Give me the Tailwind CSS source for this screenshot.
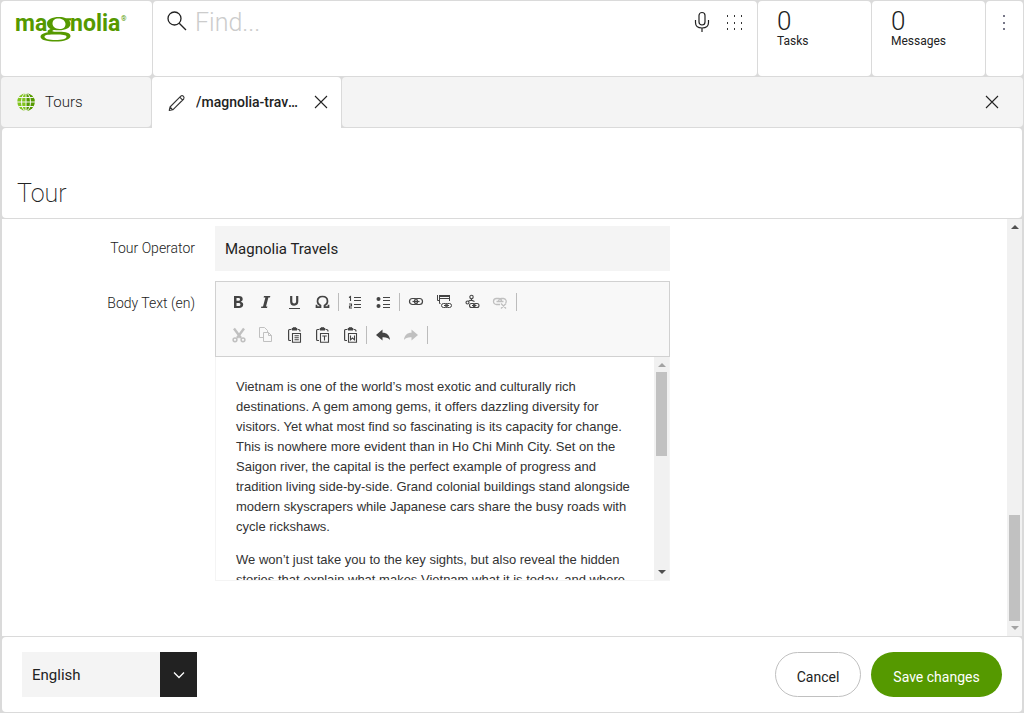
<!DOCTYPE html>
<html lang="en">
<head>
<meta charset="utf-8">
<meta name="viewport" content="width=device-width, initial-scale=1">
<title>Magnolia – Tours</title>
<script src="https://cdn.jsdelivr.net/npm/@tailwindcss/browser@4"></script>
</head>
<body class="flex h-screen flex-col gap-px overflow-hidden bg-[#dadada] p-px font-['Roboto',sans-serif] text-[#222]">

<!-- Shell header -->
<header class="flex h-[75px] shrink-0 gap-px">
  <a href="#" aria-label="Magnolia" class="block w-[151px] shrink-0 rounded-sm bg-white pt-2 pl-3">
    <svg width="120" height="36" viewBox="0 0 120 36" fill="#590" stroke="none">
      <g font-family="Roboto,sans-serif" font-weight="700" font-size="23">
        <text x="2" y="22">ma</text>
        <text x="57" y="22">nolia</text>
      </g>
      <text x="108" y="12" font-family="Roboto,sans-serif" font-size="7">®</text>
      <path fill-rule="evenodd" d="M34 14.500C34 10.500 39 8 46 8C49 8 51 8.400 53 9.200H58V11.500H56C57 12.500 57.500 13.500 57.500 14.800C57.500 19 52.500 21.300 46 21.300C44 21.300 42.500 21.200 41 20.900C39.500 21.300 39 21.800 39.500 22.200C40 22.700 42.500 22.700 46 22.700C53 22.700 57.500 24 57.500 27C57.500 30.500 51 32.500 42.500 32.500C33.500 32.500 27.500 31 27.500 27.800C27.500 25.500 30.500 24 35 23.300C33.800 22 35 20.700 37.500 19.900C35.300 18.800 34 17 34 14.500ZM39.500 14.300C39.500 17.500 42 20 46.500 20C50.500 20 52.500 18 52.500 15C52.500 11.800 49.500 9.400 45.500 9.400C41.500 9.400 39.500 11.500 39.500 14.300ZM31.500 27.700C31.500 29.700 36 31 42.500 31C49 31 53.500 29.800 53.500 27.700C53.500 26 49 25.600 43 25.600C36 25.600 31.500 25.800 31.500 27.700Z"/>
    </svg>
  </a>
  <form role="search" class="flex min-w-0 flex-1 items-start rounded-sm bg-white pl-3 pr-[11px]">
    <svg class="mt-2 shrink-0" width="24" height="24" viewBox="0 0 24 24" fill="none" stroke="#222" stroke-width="1.300"><circle cx="9.500" cy="9.500" r="6.500"/><path d="M14.200 14.200L21 21"/></svg>
    <input type="text" aria-label="Find" placeholder="Find..." class="ml-1.5 h-[42px] min-w-0 flex-1 bg-transparent text-[25px] font-light outline-none placeholder:text-[#ccc]">
    <button type="button" aria-label="Voice search" class="mt-2 flex size-6 shrink-0 items-center justify-center pt-0.5">
      <svg width="18" height="22" viewBox="0 0 18 22" fill="none" stroke="#222" stroke-width="1.200"><rect x="6" y="1.500" width="6" height="12.500" rx="3"/><path d="M2.500 9V11.500C2.500 15 5 17 9 17S15.500 15 15.500 11.500V9M9 17V21"/></svg>
    </button>
    <button type="button" aria-label="Apps" class="ml-2 mt-2 flex size-6 shrink-0 items-center justify-center pt-0.5">
      <svg width="18" height="18" viewBox="0 0 18 18" fill="#333"><path d="M2 2h1v2H2zM9 2h1v2H9zM16 2h1v2h-1zM2 9h1v2H2zM9 9h1v2H9zM16 9h1v2h-1zM2 15h1v2H2zM9 15h1v2H9zM16 15h1v2h-1z"/></svg>
    </button>
  </form>
  <button type="button" class="flex w-[113px] shrink-0 flex-col items-start rounded-sm bg-white pl-[19px] pt-1.5 text-left">
    <span class="text-[26px] font-light leading-7">0</span><span class="text-xs leading-3">Tasks</span>
  </button>
  <button type="button" class="flex w-[113px] shrink-0 flex-col items-start rounded-sm bg-white pl-[19px] pt-1.5 text-left">
    <span class="text-[26px] font-light leading-7">0</span><span class="text-xs leading-3">Messages</span>
  </button>
  <button type="button" aria-label="More" class="flex w-[37px] shrink-0 justify-center rounded-sm bg-white pt-3">
    <svg width="6" height="18" viewBox="0 0 6 18" fill="#778"><path d="M1 2h2v2H1zM1 9h2v2H1zM1 15h2v2H1z"/></svg>
  </button>
</header>

<!-- App tabs -->
<nav class="flex h-[50px] shrink-0 gap-px">
  <button type="button" class="flex w-[150px] shrink-0 items-center gap-2.5 rounded-sm bg-[#f4f4f4] pl-4 text-left text-[15px] font-light">
    <svg width="18" height="18" viewBox="0 0 18 18"><circle cx="9" cy="9" r="8.700" fill="#80c41c"/><path d="M9 .3a8.700 8.700 0 0 1 0 17.400z" fill="#590"/><g fill="none" stroke="#f4f4f4" stroke-width="1"><path d="M9 0V18M0 9H18M1.500 4.500H16.500M1.500 13.500H16.500"/><ellipse cx="9" cy="9" rx="4.500" ry="8.800"/></g></svg>
    <span>Tours</span>
  </button>
  <div class="-mb-px flex w-[189px] shrink-0 items-center rounded-t-sm bg-white pb-px pl-4">
    <svg class="mt-0.5 shrink-0" width="18" height="18" viewBox="0 0 18 18" fill="none" stroke="#333" stroke-width="1.100" stroke-linejoin="round"><path d="M1.200 16.500L2 13L12.800 2.200Q14 1 15.300 2.200T15.700 5L4.800 15.800ZM11.800 3.200L14.600 6.100M2 13L4.800 15.800"/></svg>
    <span class="ml-2.5 w-[106px] truncate text-sm font-medium">/magnolia-travels</span>
    <button type="button" aria-label="Close tab" class="ml-[11px] flex size-4 items-center justify-center"><svg width="14" height="14" viewBox="0 0 14 14" stroke="#222" stroke-width="1.100"><path d="M1 1L13 13M13 1L1 13"/></svg></button>
  </div>
  <div class="flex min-w-0 flex-1 items-center justify-end rounded-sm bg-[#f4f4f4] pr-[23px]">
    <button type="button" aria-label="Close app" class="flex size-4 items-center justify-center"><svg width="14" height="14" viewBox="0 0 14 14" stroke="#222" stroke-width="1.100"><path d="M1 1L13 13M13 1L1 13"/></svg></button>
  </div>
</nav>

<main class="flex min-h-0 flex-1 flex-col gap-px px-px">
  <div class="flex h-[90px] shrink-0 items-end rounded-sm bg-white px-[15px] pb-2">
    <h1 class="text-[25px] font-extralight leading-8 text-[#222]">Tour</h1>
  </div>

  <div class="flex min-h-0 flex-1 bg-white">
    <form class="flex min-w-0 flex-1 flex-col gap-2.5 overflow-hidden pt-[7px]">
      <div class="flex gap-5">
        <label for="operator" class="w-[193px] shrink-0 text-right text-sm font-light leading-[45px]">Tour Operator</label>
        <input id="operator" type="text" value="Magnolia Travels" class="h-[45px] w-[455px] bg-[#f4f4f4] px-2.5 text-[15px] outline-none">
      </div>
      <div class="flex gap-5">
        <span id="body-label" class="w-[193px] shrink-0 text-right text-sm font-light leading-[45px]">Body Text (en)</span>
        <div class="w-[455px]">
          <div role="toolbar" aria-label="Formatting" class="border border-[#d1d1d1] bg-[#f8f8f8] pt-[3px] pb-[5px] pl-2 text-[#444]">
            <div class="flex h-[33px] items-center">
              <button type="button" aria-label="Bold" class="flex w-7 justify-center"><svg width="16" height="16" viewBox="0 0 16 16"><path fill="currentColor" fill-rule="evenodd" d="M4 2H8.800C11.500 2 12.700 3.200 12.700 5C12.700 6.400 12 7.300 10.700 7.700C12.300 8.100 13.200 9.100 13.200 10.600C13.200 12.700 11.700 14 9 14H4ZM6.500 4.100V6.800H8.300C9.400 6.800 10 6.300 10 5.400C10 4.500 9.400 4.100 8.300 4.100ZM6.500 8.900V11.900H8.500C9.800 11.900 10.400 11.400 10.400 10.400C10.400 9.400 9.800 8.900 8.500 8.900Z"/></svg></button>
              <button type="button" aria-label="Italic" class="flex w-7 justify-center"><svg width="16" height="16" viewBox="0 0 16 16"><path fill="currentColor" d="M6 2H12.300L12 3.600H10.400L8 12.400H9.400L9 14H3L3.400 12.400H5L7.400 3.600H5.600Z"/></svg></button>
              <button type="button" aria-label="Underline" class="flex w-7 justify-center"><svg width="16" height="16" viewBox="0 0 16 16" fill="none" stroke="currentColor"><path stroke-width="2.200" d="M5.200 2V7.500C5.200 9.500 6.200 10.600 8.200 10.600S11.200 9.500 11.200 7.500V2"/><path d="M3 14.500H14"/></svg></button>
              <button type="button" aria-label="Special character" class="flex w-7 justify-center"><svg width="16" height="16" viewBox="0 0 16 16" fill="none" stroke="currentColor" stroke-width="1.700"><path d="M2.500 10.700V13.200H6.500V11.500C4.500 10.500 3.500 9 3.500 7.200C3.500 4.500 5.300 2.500 8.500 2.500S13.500 4.500 13.500 7.200C13.500 9 12.500 10.500 10.500 11.500V13.200H14.500V10.700"/></svg></button>
              <span class="mx-0.5 h-[18px] w-px bg-[#bcbcbc]"></span>
              <button type="button" aria-label="Numbered list" class="flex w-7 justify-center"><svg width="16" height="16" viewBox="0 0 16 16" fill="none" stroke="currentColor"><path d="M7 3.500H14M7 6.500H14M7 10.500H14M7 13.500H14"/><path stroke-width="1.100" d="M2 3.500L3.500 2.500V7M2 10H4.500V12H2.500V14H5"/></svg></button>
              <button type="button" aria-label="Bulleted list" class="flex w-7 justify-center"><svg width="16" height="16" viewBox="0 0 16 16" fill="currentColor"><circle cx="3.500" cy="5" r="2"/><circle cx="3.500" cy="12" r="2"/><path d="M8 3h7v1H8zM8 6h7v1H8zM8 10h7v1H8zM8 13h7v1H8z"/></svg></button>
              <span class="mx-0.5 h-[18px] w-px bg-[#bcbcbc]"></span>
              <button type="button" aria-label="Link" class="flex w-7 justify-center"><svg width="16" height="16" viewBox="0 0 16 16" fill="none" stroke="currentColor" stroke-width="1.200"><rect x="1.500" y="4.500" width="8" height="6" rx="3"/><rect x="6.500" y="4.500" width="8" height="6" rx="3"/><path d="M4.500 7.500H11.500"/></svg></button>
              <button type="button" aria-label="Link to page" class="flex w-7 justify-center"><svg width="16" height="16" viewBox="0 0 16 16" fill="none" stroke="currentColor"><path d="M4.500 9.500H3.500V2H13.500V7M3.500 4.500H13.500" /><path stroke-width="2" d="M3 2H14"/><path d="M3.500 6.500H1.500V1"/><rect x="5.500" y="9.500" width="6" height="4" rx="2"/><rect x="9.500" y="9.500" width="6" height="4" rx="2"/><path d="M8 11.500H13"/></svg></button>
              <button type="button" aria-label="Link to asset" class="flex w-7 justify-center"><svg width="16" height="16" viewBox="0 0 16 16" fill="none" stroke="currentColor" stroke-width="1.100"><circle cx="7.500" cy="3" r="1.700"/><circle cx="3.500" cy="8.500" r="1.500"/><path d="M7.500 4.700V6.500M4.500 7L7.500 6.200L10.500 7.500"/><rect x="5.500" y="9.500" width="5.500" height="4" rx="2"/><rect x="9.500" y="9.500" width="5.500" height="4" rx="2"/><path d="M8 11.500H12.500"/></svg></button>
              <button type="button" disabled aria-label="Unlink" class="flex w-7 justify-center text-[#c0c0c0]"><svg width="16" height="16" viewBox="0 0 16 16" fill="none" stroke="currentColor" stroke-width="1.300"><path d="M8 10.500H4.500A3 3 0 0 1 4.500 4.500H6.500A3 3 0 0 1 9.500 7.500M6.500 7.500A3 3 0 0 1 9.500 4.500H11.500A3 3 0 0 1 13.500 9.500M4.500 7.500H11.500M9 9.500L14 14.500M14 9.500L9 14.500"/></svg></button>
              <span class="mx-0.5 h-[18px] w-px bg-[#bcbcbc]"></span>
            </div>
            <div class="flex h-[33px] items-center">
              <button type="button" disabled aria-label="Cut" class="flex w-7 justify-center text-[#c0c0c0]"><svg width="16" height="16" viewBox="0 0 16 16" fill="none" stroke="currentColor"><path stroke-width="2.400" d="M4 1.500L11 11M14 1.500L7 11"/><circle stroke-width="1.500" cx="5" cy="12.800" r="1.900"/><circle stroke-width="1.500" cx="13" cy="12.800" r="1.900"/></svg></button>
              <button type="button" disabled aria-label="Copy" class="flex w-7 justify-center text-[#c0c0c0]"><svg width="16" height="16" viewBox="0 0 16 16" fill="none" stroke="currentColor"><path d="M5.500 10.500H1.500V.5H6.500L9.500 3.500V5M5.500 5.500H10.500L13.500 8.500V14.500H5.500ZM10.500 5.500V8.500H13.500"/></svg></button>
              <button type="button" aria-label="Paste" class="flex w-7 justify-center"><svg width="16" height="16" viewBox="-1 0 16 16" fill="none" stroke="currentColor"><path stroke-width="1.200" d="M4 2.500H2.500Q1.600 2.500 1.600 3.500V12.500Q1.600 13.500 2.500 13.500H4M11 2.500Q13 2.300 13 4.500"/><path fill="currentColor" d="M5 3V1.500H6V.8H9V1.500H10V3Z"/><path stroke-width="1.100" d="M5.500 6.500H13.500V15.300H5.500ZM7.500 8.800H11.800M7.500 10.800H11.800M7.500 12.800H11.800"/></svg></button>
              <button type="button" aria-label="Paste as plain text" class="flex w-7 justify-center"><svg width="16" height="16" viewBox="-1 0 16 16" fill="none" stroke="currentColor"><path stroke-width="1.200" d="M4 2.500H2.500Q1.600 2.500 1.600 3.500V12.500Q1.600 13.500 2.500 13.500H4M11 2.500Q13 2.300 13 4.500"/><path fill="currentColor" d="M5 3V1.500H6V.8H9V1.500H10V3Z"/><path stroke-width="1.100" d="M5.500 6.500H13.500V15.300H5.500ZM7.300 9H11.800M9.500 9V13.500"/></svg></button>
              <button type="button" aria-label="Paste from Word" class="flex w-7 justify-center"><svg width="16" height="16" viewBox="-1 0 16 16" fill="none" stroke="currentColor"><path stroke-width="1.200" d="M4 2.500H2.500Q1.600 2.500 1.600 3.500V12.500Q1.600 13.500 2.500 13.500H4M11 2.500Q13 2.300 13 4.500"/><path fill="currentColor" d="M5 3V1.500H6V.8H9V1.500H10V3Z"/><path stroke-width="1.100" d="M5.500 6.500H13.500V15.300H5.500ZM7.500 8.500V12.800L9.500 11L11.500 12.800V8.500"/></svg></button>
              <span class="mx-0.5 h-[18px] w-px bg-[#bcbcbc]"></span>
              <button type="button" aria-label="Undo" class="flex w-7 justify-center"><svg width="16" height="16" viewBox="0 0 16 16" fill="currentColor"><path d="M1 8L7.500 2.500V5.800C12 5.800 14.700 8.500 15 13C13.500 10.800 11 10 7.500 10.200V13.500Z"/></svg></button>
              <button type="button" disabled aria-label="Redo" class="flex w-7 justify-center text-[#c0c0c0]"><svg width="16" height="16" viewBox="0 0 16 16" fill="currentColor"><path d="M15 8L8.500 2.500V5.800C4 5.800 1.300 8.500 1 13C2.500 10.800 5 10 8.500 10.200V13.500Z"/></svg></button>
              <span class="mx-0.5 h-[18px] w-px bg-[#bcbcbc]"></span>
            </div>
          </div>
          <div class="flex h-[224px] overflow-hidden border-x border-b border-[#f4f4f4]">
            <div role="textbox" aria-multiline="true" aria-labelledby="body-label" contenteditable="true" class="min-w-0 flex-1 space-y-[13px] overflow-hidden p-5 font-['Liberation_Sans',Arial,sans-serif] text-[13px] leading-5 text-[#333] outline-none">
              <p>Vietnam is one of the world’s most exotic and culturally rich destinations. A gem among gems, it offers dazzling diversity for visitors. Yet what most find so fascinating is its capacity for change. This is nowhere more evident than in Ho Chi Minh City. Set on the Saigon river, the capital is the perfect example of progress and tradition living side-by-side. Grand colonial buildings stand alongside modern skyscrapers while Japanese cars share the busy roads with cycle rickshaws.</p>
              <p>We won’t just take you to the key sights, but also reveal the hidden stories that explain what makes Vietnam what it is today, and where</p>
            </div>
            <div aria-hidden="true" class="flex w-[15px] shrink-0 flex-col items-center bg-[#f1f1f1]">
              <svg class="h-[15px] w-2 shrink-0" viewBox="0 0 8 15" fill="#a3a3a3"><path d="M0 10L4 6L8 10Z"/></svg>
              <span class="h-[84px] w-[11px] shrink-0 bg-[#c1c1c1]"></span>
              <span class="flex-1"></span>
              <svg class="h-[15px] w-2 shrink-0" viewBox="0 0 8 15" fill="#505050"><path d="M0 5L4 9L8 5Z"/></svg>
            </div>
          </div>
        </div>
      </div>
    </form>
    <div aria-hidden="true" class="flex w-[15px] shrink-0 flex-col items-center bg-[#f1f1f1]">
      <svg class="h-[15px] w-2 shrink-0" viewBox="0 0 8 15" fill="#505050"><path d="M0 10L4 6L8 10Z"/></svg>
      <span class="flex-1"></span>
      <span class="h-[106px] w-[11px] shrink-0 bg-[#c1c1c1]"></span>
      <svg class="h-[15px] w-2 shrink-0" viewBox="0 0 8 15" fill="#a3a3a3"><path d="M0 5L4 9L8 5Z"/></svg>
    </div>
  </div>

  <footer class="flex h-[75px] shrink-0 items-center rounded-sm bg-white px-5">
    <div class="relative h-[45px] w-[175px]">
      <select aria-label="Language" class="size-full appearance-none bg-[#f4f4f4] pl-2.5 pt-0.5 text-[15px] outline-none"><option>English</option></select>
      <span class="pointer-events-none absolute inset-y-0 right-0 flex w-[37px] items-center justify-center bg-[#222]"><svg width="12" height="8" viewBox="0 0 12 8" fill="none" stroke="#fff" stroke-width="1.300"><path d="M1 1.500L6 6.500L11 1.500"/></svg></span>
    </div>
    <button type="button" class="ml-auto h-[45px] w-[86px] rounded-full border border-[#c0c0c0] pt-1 text-sm">Cancel</button>
    <button type="button" class="ml-2.5 h-[45px] w-[131px] rounded-full bg-[#590] pt-1 text-sm text-white">Save changes</button>
  </footer>
</main>
</body>
</html>
